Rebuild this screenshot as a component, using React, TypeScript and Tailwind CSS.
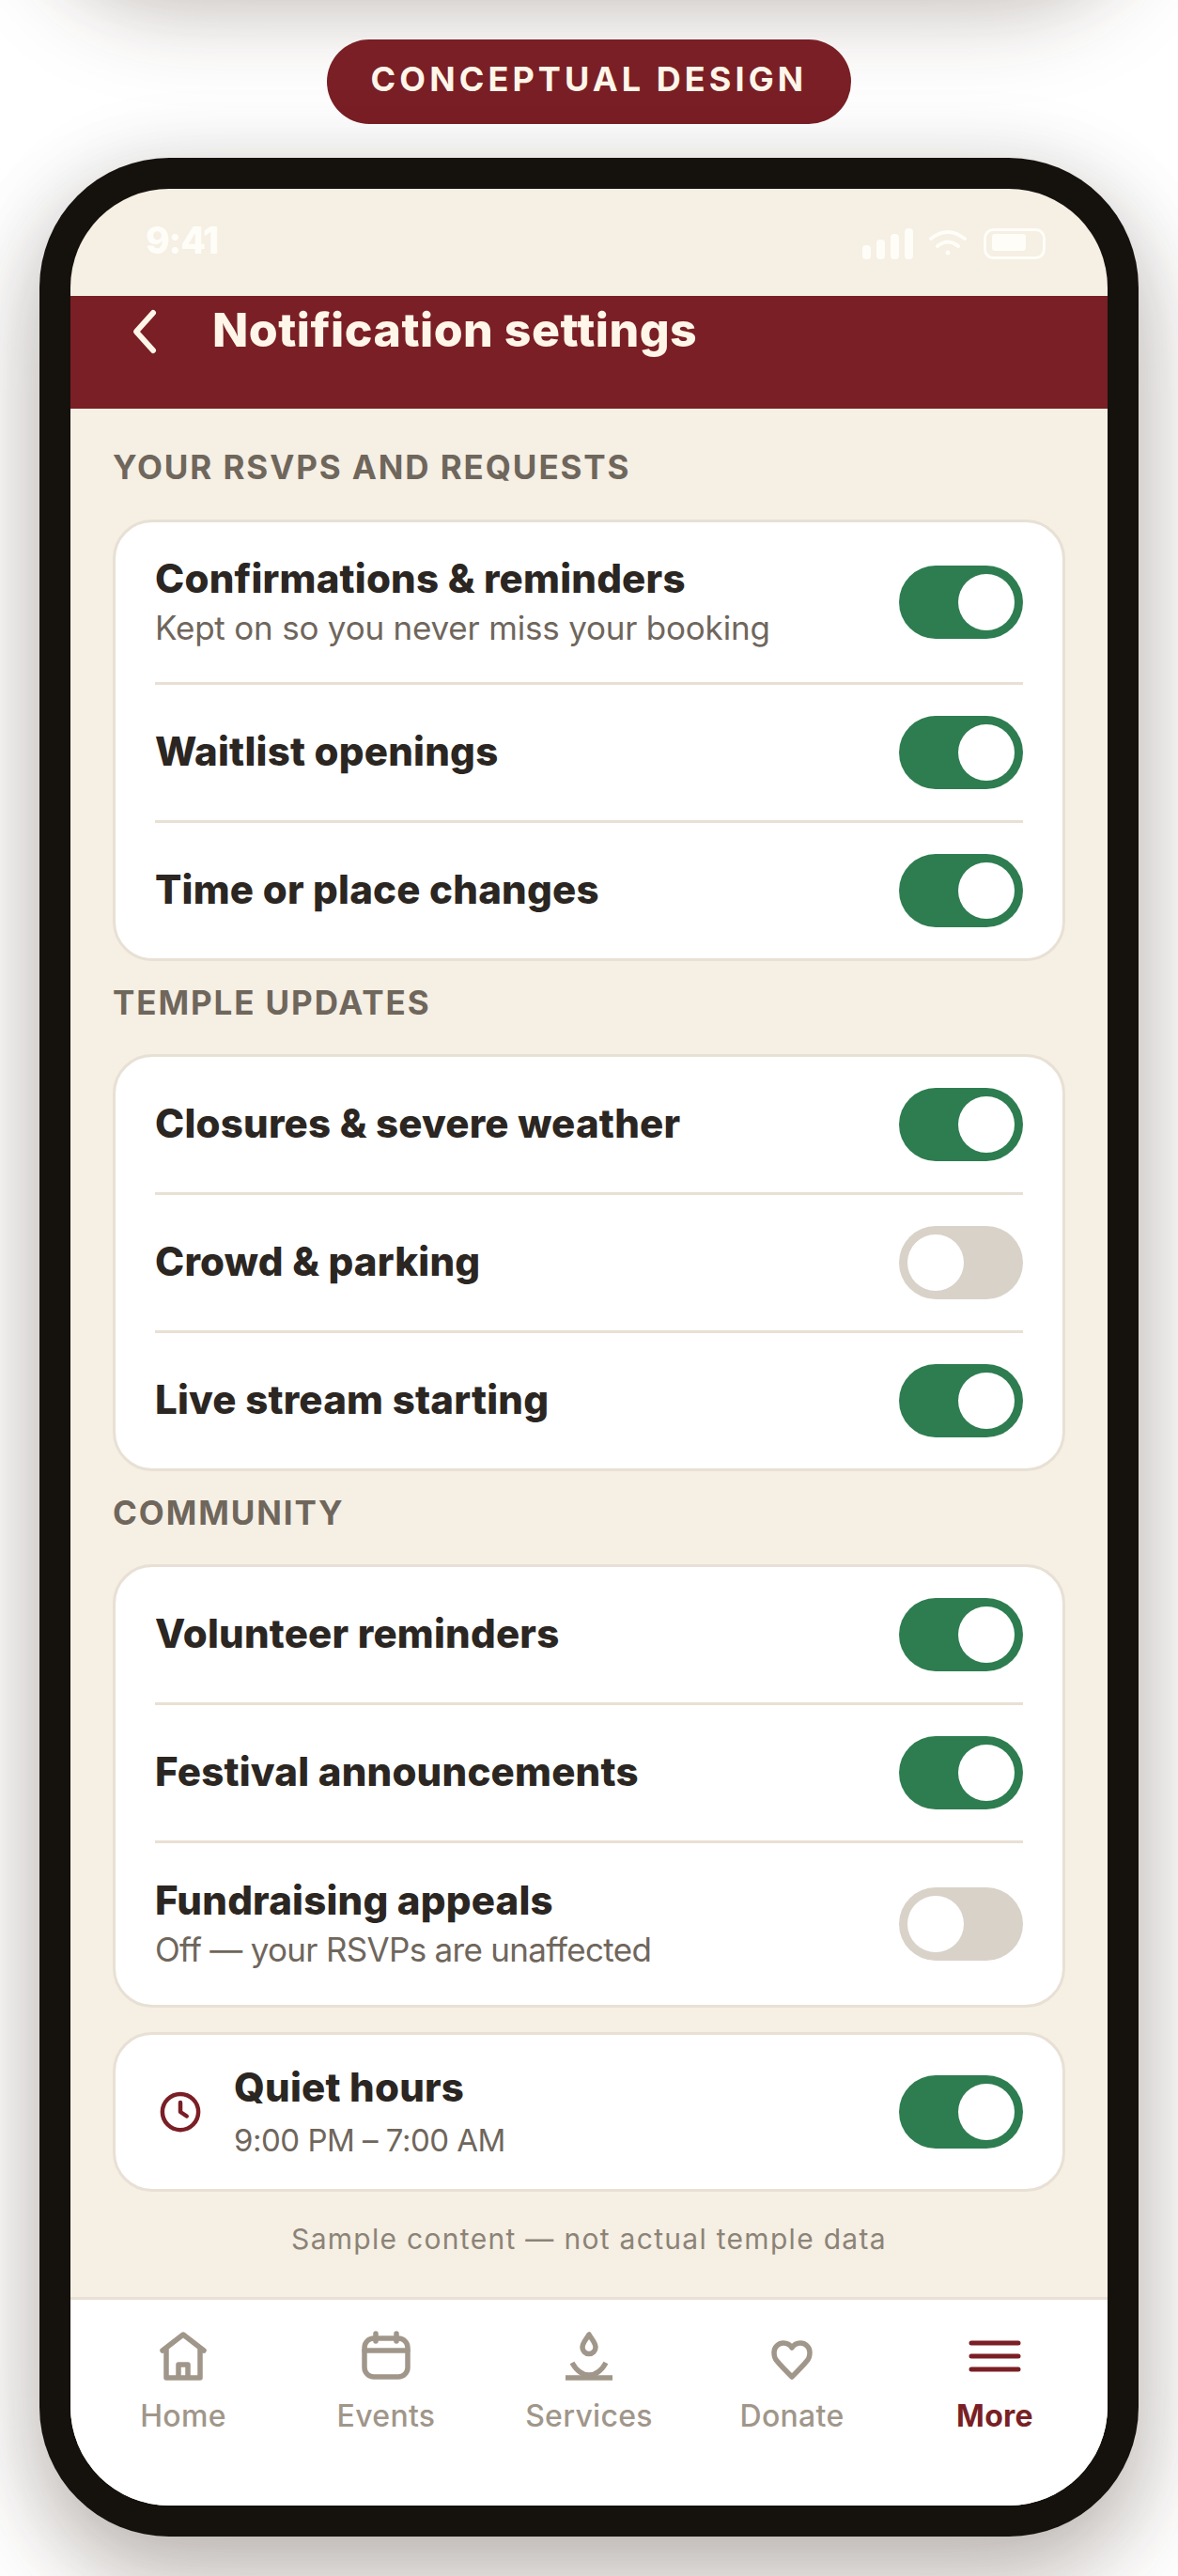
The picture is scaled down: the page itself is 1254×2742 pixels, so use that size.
import type { ReactNode } from 'react'

const phoneShadow = 'shadow-[0_50px_100px_rgba(60,40,25,0.26),0_10px_90px_rgba(0,0,0,0.14)]'

function Toggle({ on = true }: { on?: boolean }) {
  return (
    <div
      className={`flex h-[78px] w-[132px] shrink-0 items-center rounded-full px-[9px] ${
        on ? 'justify-end bg-[#2e7d50]' : 'justify-start bg-[#d9d2c8]'
      }`}
    >
      <div className="size-[60px] rounded-full bg-white" />
    </div>
  )
}

type RowProps = { title: string; sub?: string; subClass?: string; on?: boolean; last?: boolean }

function Row({ title, sub, subClass, on = true, last }: RowProps) {
  const height = sub ? (last ? 'h-[172px]' : 'h-[170px]') : 'h-[144px]'
  return (
    <div className={`flex items-center justify-between ${height} ${last ? '' : 'box-content border-b-[3px] border-[#e8e0d4]'}`}>
      <div className={sub ? 'pb-[1px]' : 'pb-[3px]'}>
        <div className="text-[42px] font-extrabold leading-[52px] tracking-[0.2px] text-[#2b2622]">{title}</div>
        {sub ? <div className={`mt-[3px] text-[35px] leading-[46px] text-[#6f665c] ${subClass}`}>{sub}</div> : null}
      </div>
      <Toggle on={on} />
    </div>
  )
}

function Section({ label, children, first }: { label: string; children: ReactNode; first?: boolean }) {
  return (
    <section className={first ? 'mt-[35px]' : 'mt-[17px]'}>
      <h2 className={`text-[35px] font-bold uppercase leading-[54px] tracking-[1.9px] text-[#6f665c] ${first ? 'mb-[29px]' : 'mb-[28px]'}`}>{label}</h2>
      <div className="rounded-[42px] border-[3px] border-[#e8e0d4] bg-white px-[42px]">{children}</div>
    </section>
  )
}

function NavItem({ label, active, children }: { label: string; active?: boolean; children: ReactNode }) {
  return (
    <div className={`flex flex-col items-center ${active ? 'text-[#7a1f25]' : 'text-[#a0968a]'}`}>
      <svg width="72" height="60" viewBox="0 0 72 60" fill="none" stroke="currentColor" strokeWidth="5.5" strokeLinejoin="round" strokeLinecap="round">
        {children}
      </svg>
      <span className={`mt-[12px] text-[32px] leading-[44px] tracking-[0.3px] ${active ? 'font-bold' : 'font-medium'}`}>{label}</span>
    </div>
  )
}

export default function App() {
  return (
    <div className="relative flex h-[2742px] flex-col items-center overflow-hidden bg-white [font-family:Inter,sans-serif]">
      {/* edge of the phone stacked above this one */}
      <div className={`absolute left-[42px] top-[-380px] h-[340px] w-[1170px] rounded-[138px] ${phoneShadow}`} />

      <div className="relative mt-[42px] flex h-[90px] w-[558px] items-center justify-center rounded-full bg-[#7a1f25] pb-[6px] text-[36px] font-bold uppercase tracking-[4.1px] text-[#fff6e9]">
        Conceptual Design
      </div>

      <div className={`relative mt-[36px] h-[2532px] w-[1170px] rounded-[138px] bg-[#15120e] p-[33px] ${phoneShadow}`}>
        <div className="flex h-full flex-col overflow-hidden rounded-[105px] bg-[#f5efe4]">
          <div className="flex h-[114px] shrink-0 justify-between pl-[80px] pr-[66px] pt-[35px] text-[#fffdf8]">
            <span className="text-[39px] font-extrabold leading-[40px] tracking-[-1.2px]">9:41</span>
            <svg width="195" height="33" viewBox="0 0 195 33" className="mt-[7px]" fill="currentColor">
              <rect x="0" y="18" width="9" height="15" rx="4" />
              <rect x="15" y="12" width="9" height="21" rx="4" />
              <rect x="30" y="6" width="9" height="27" rx="4" />
              <rect x="45" y="0" width="9" height="33" rx="4" />
              <path d="M73 11 Q91 -3 109 11 M80 19 Q91 10 102 19" fill="none" stroke="currentColor" strokeWidth="4" strokeLinecap="round" />
              <circle cx="91" cy="26" r="2.5" />
              <rect x="130.5" y="1.5" width="63" height="30" rx="9" fill="none" stroke="currentColor" strokeWidth="3" />
              <rect x="138" y="6" width="36" height="18" rx="3" />
            </svg>
          </div>

          <header className="flex h-[120px] shrink-0 items-start bg-[#7a1f25] text-[#fff6e9]">
            <svg width="36" height="54" viewBox="0 0 36 54" className="ml-[61px] mt-[11px]" fill="none" stroke="currentColor" strokeWidth="6" strokeLinecap="round" strokeLinejoin="round">
              <path d="M27 7 L9 27 L27 47" />
            </svg>
            <h1 className="ml-[54px] mt-[6px] text-[50px] font-extrabold leading-[60px] tracking-[0.5px]">Notification settings</h1>
          </header>

          <main className="flex-1 px-[45px]">
            <Section label="Your RSVPs and requests" first>
              <Row title="Confirmations & reminders" sub="Kept on so you never miss your booking" subClass="tracking-[-0.2px]" />
              <Row title="Waitlist openings" />
              <Row title="Time or place changes" last />
            </Section>
            <Section label="Temple updates">
              <Row title="Closures & severe weather" />
              <Row title="Crowd & parking" on={false} />
              <Row title="Live stream starting" last />
            </Section>
            <Section label="Community">
              <Row title="Volunteer reminders" />
              <Row title="Festival announcements" />
              <Row title="Fundraising appeals" sub="Off — your RSVPs are unaffected" subClass="tracking-[-0.7px]" on={false} last />
            </Section>

            <div className="mt-[26px] flex h-[170px] items-center rounded-[42px] border-[3px] border-[#e8e0d4] bg-white px-[42px]">
              <svg width="54" height="54" viewBox="0 0 24 24" className="shrink-0 text-[#7a1f25]" fill="none" stroke="currentColor" strokeWidth="2" strokeLinecap="round" strokeLinejoin="round">
                <circle cx="12" cy="12" r="8.5" />
                <path d="M12 7.5 V12 L15 14" />
              </svg>
              <div className="ml-[30px] flex-1">
                <div className="text-[42px] font-extrabold leading-[52px] tracking-[0.2px] text-[#2b2622]">Quiet hours</div>
                <div className="mt-[7px] text-[33px] leading-[46px] tracking-[-0.5px] text-[#6f665c]">9:00 PM – 7:00 AM</div>
              </div>
              <Toggle />
            </div>

            <p className="mt-[28px] text-center text-[30px] leading-[44px] tracking-[1.3px] text-[#8c8377]">
              Sample content — not actual temple data
            </p>
          </main>

          <nav className="grid h-[222px] shrink-0 grid-cols-5 border-t-[3px] border-[#e8e0d4] bg-white px-[12px] pt-[30px]">
            <NavItem label="Home">
              <path d="M14 24 L36 7 L58 24 M18 21 V53 H54 V21 M31 53 V39 H41 V53" />
            </NavItem>
            <NavItem label="Events">
              <rect x="13" y="11" width="46" height="41" rx="10" />
              <path d="M13 24 H59 M25 6 V14 M47 6 V14" />
            </NavItem>
            <NavItem label="Services">
              <path d="M36 7 C33 12 29 16 29 20.5 a7 7 0 0 0 14 0 C43 16 39 12 36 7Z" />
              <path d="M18 37 C23 46 29 50 36 50 C43 50 49 46 54 37" strokeLinecap="butt" />
              <path d="M11 53 H61" strokeLinecap="butt" />
            </NavItem>
            <NavItem label="Donate">
              <path d="M36 52 C30 46 24 40 20 35 C17 32 17 28 17 26 C17 20 22 16 27 16 C31 16 34 18 36 21 C38 18 41 16 45 16 C50 16 55 20 55 26 C55 28 55 32 52 35 C48 40 42 46 36 52Z" />
            </NavItem>
            <NavItem label="More" active>
              <path d="M11 16 H61 M11 30 H61 M11 44 H61" strokeWidth="5" />
            </NavItem>
          </nav>
        </div>
      </div>
    </div>
  )
}
